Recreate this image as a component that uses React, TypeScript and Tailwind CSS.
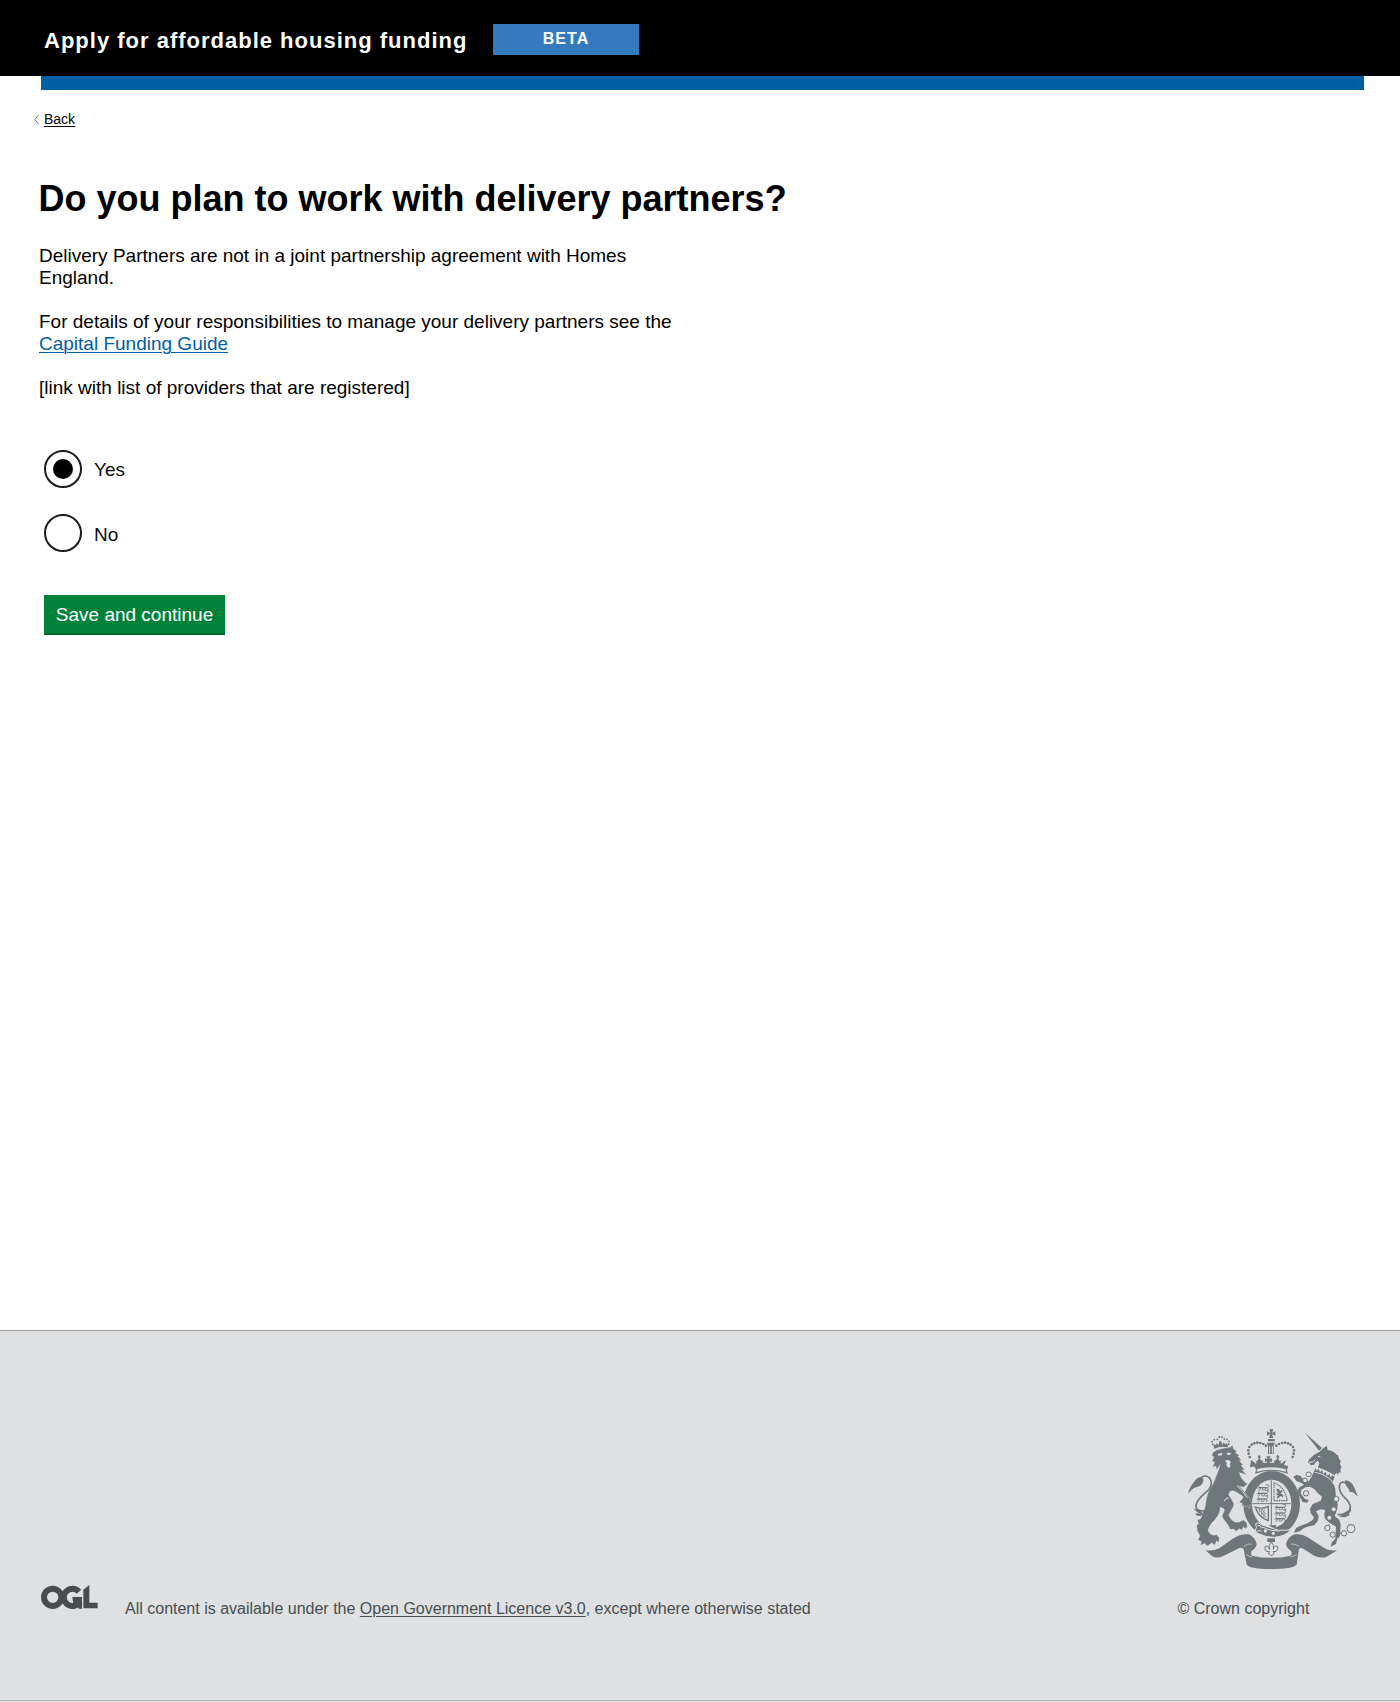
import React from "react";

function Crest({ className }: { className: string }) {
  const beads: [number, number][] = [
    [239, 141], [236, 131], [235, 121], [238, 111], [245, 104], [253, 100], [262, 98], [271, 99], [280, 102], [288, 107],
    [368, 141], [371, 131], [372, 121], [369, 111], [362, 104], [354, 100], [345, 98], [336, 99], [327, 102], [319, 107],
  ];
  const lionBeads: [number, number][] = [
    [80, 43], [78, 35], [85, 29], [94, 28], [100, 21], [108, 21], [115, 27], [123, 28], [129, 34], [128, 42],
  ];
  const charges: [number, number][] = [
    [260, 232], [258, 249], [257, 266], [311, 291], [311, 308], [311, 325],
  ];
  return (
    <svg viewBox="0 0 600 510" className={className} fill="#6f777b">
      {/* garter and shield */}
      <ellipse cx="305" cy="281" rx="72" ry="85" fill="none" stroke="#6f777b" strokeWidth="26" />
      <path d="M304 211v136M247 281h115" stroke="#6f777b" strokeWidth="3" />
      {charges.map(([x, y]) => (
        <g key={`${x}-${y}`} transform={`translate(${x} ${y})`} fill="none" stroke="#6f777b">
          <path d="M6 1h26" strokeWidth="4" />
          <path d="M8-4v5l-6 2M12 1l-3 8h-4M17 1l2 7h-4M28 1l-4 8h-4M31 1l5 7h-5M32 1q7-2 4-8l-9-1" strokeWidth="2.4" />
        </g>
      ))}
      <path d="M312 219q32 10 40 53h-40z" fill="none" stroke="#6f777b" strokeWidth="3.5" strokeDasharray="5 2" />
      <path d="M320 236l7 1 3 6 6-3 1 5-5 5 8 6-1 6-8-4-6 7-5-1 4-9-6-2 2-5 5 1-5-6z" />
      <path d="M256 291q20 8 39-2v43q-29-8-39-41z" fill="none" stroke="#6f777b" strokeWidth="4" />
      <path d="M265 296l24 27M273 296l16 18M268 306v-10M275 317v-21M282 324v-29" stroke="#6f777b" strokeWidth="2" />

      {/* central crown */}
      <path d="M298 58h12l-4 11 10-5v13l-10-5 4 12h-13l4-12-10 5V64l11 5zM294 87h20v7h-20zM291 98h25l-5 8v26h-17v-25z" />
      <path d="M299 109v22M307 109v22" stroke="#dee0e2" strokeWidth="3" />
      {beads.map(([x, y]) => <circle key={`${x}-${y}`} cx={x} cy={y} r="4" />)}
      <path d="M243 150l9 6 5 5 3-3-3-6 6 0 3-6-3-6 5-6 4 6-2 7 5 5 5-1-3 7h16l-4-4-4 2v-11l8 2-4-8h13l-4 8 8-2v11l-4-2-4 4h16l-3-7 5 1 5-5-2-7 4-6 5 6-3 6 3 6h6l-3 6 3 3 5-5 9-6-8 22q-50-13-100 0z" />
      <path d="M253 168q51-13 102 0l-4 11q1 6 3 12-49-18-99 0l3-12z" />
      <path d="M261 177q43-11 86 0l1 8q-44-12-88 0z" fill="#dee0e2" />

      {/* fleur-de-lis and ribbon */}
      <path d="M292 385h23v11h-23z" />
      <path d="M304 396q10 9 6 22 2-12 12-9 5 8-3 15l-10 1 4 6-9 6-9-6 4-6-10-1q-8-7-3-15 10-3 12 9-4-13 6-22z" fill="none" stroke="#6f777b" strokeWidth="3" />
      <path d="M106 421Q130 424 148 415L188 386Q214 370 236 373 254 380 260 402 258 414 246 422 240 430 246 437 304 450 362 437 368 430 362 422 350 414 348 402 354 380 374 373 396 370 420 386L458 411Q476 424 502 421L470 440Q452 447 430 436L400 416Q386 410 386 424L380 464Q366 477 304 477 242 477 230 464L222 424Q222 410 208 414L160 438Q140 447 126 438Z" />
      <path d="M220 409q14-9 25-7M388 409q-14-9-25-7M228 433q5 5 19 8M380 433q-5 5-19 8" fill="none" stroke="#dee0e2" strokeWidth="2" />

      {/* buckled strap */}
      <path d="M257 341q8-7 17 3l52 17 36-1q-17 20-50 22-24 0-43-10-14-3-13-12 6-4 1-19z" stroke="#dee0e2" strokeWidth="3" />
      <path d="M263 347q9-4 12 8M259 365q9-7 16-1M276 351q24 13 52 12" fill="none" stroke="#dee0e2" strokeWidth="3" />
      <circle cx="286" cy="363" r="5" fill="#dee0e2" /><circle cx="310" cy="370" r="5" fill="#dee0e2" />
      <path d="M295 346l19 9 6-10z" />

      {/* lion */}
      <g transform="translate(48 60)">
        {lionBeads.map(([x, y]) => <circle key={`${x}-${y}`} cx={x} cy={y} r="2.8" />)}
        <path d="M82 48l3-5 5 3 2-7 5 7 4-13h4l4 12 4-8 4 6 6-3 3 5-1 7q-21-5-40 4z" />
        <path d="M80 68L92 60 112 55 132 52 140 46 142 56 152 64 148 68 160 76 155 79 166 90 160 92 171 105 165 106 176 120 168 119 181 134 168 130 160 128 164 140Q172 155 184 162L172 172 160 168Q172 180 186 198L196 214 199 228 193 224 190 236 184 227 178 232 174 226 165 229 170 221 160 216 168 208 172 200Q158 188 142 182L132 184 128 195Q138 208 144 222 143 232 134 244L128 256Q136 272 148 277L160 276 172 270 182 278 184 290 178 296 172 290 168 300 160 296 150 304 143 297 132 298 128 288 112 266 108 258 116 240Q112 232 102 232 104 248 88 268 70 285 66 300 68 312 82 316L92 314 100 324 98 338 92 332 86 346 78 338 64 348 56 340 44 346 46 334 36 330 42 318 34 302 32 284 38 282 34 270 44 266 50 250Q60 232 60 214 62 188 82 160L98 120 102 104 92 120 90 108 80 112 86 96 78 94 84 80 78 78Z" stroke="#dee0e2" strokeWidth="1" />
        <path d="M95 72l15-4-3 8-9 1zM122 68l14 1-5 6-8-1zM117 92q7-4 13-1l5 6-3 3 1 10-5 4-7-8 1-7z" fill="#dee0e2" />
        <path d="M153 167q16 13 31 36M128 204q-8-2-14 10" fill="none" stroke="#dee0e2" strokeWidth="3" />
        <path d="M56 243q-28 0-26-17 2-16 26-36 21-16 20-33-3-19-19-19-12 1-17 13" fill="none" stroke="#6f777b" strokeWidth="5" />
        <path d="M34 145q9-7 18 1 1 15-11 22l-17 6q-10 6-17 17 3-19 14-31 6-10 13-15zM22 236l20 4 10 12-14-2zM28 250l24 2-9 6-11-1z" />
      </g>

      {/* unicorn */}
      <g transform="translate(360 60)">
        <path d="M45 8l51 46-9 8z" />
        <path d="M72 74L88 66 98 56 110 47 113 60Q130 62 140 74L144 76 147 86 152 92 150 101 154 111 151 119 153 129 147 126 144 134 139 128 134 136Q112 122 84 112L88 98 82 92 76 98 72 104 62 106 59 100 54 98 56 90Z" />
        <path d="M57 97l13-2 6-6M84 80h7" fill="none" stroke="#dee0e2" strokeWidth="3" />
        <path d="M76 114l5 9 4-8 5 12 6-7 4 12 7-7 4 12 8-6 1 10 8-5 6 4-8 22q-22-22-56-32z" />
        <path d="M74 127q34 5 54 29" fill="none" stroke="#dee0e2" strokeWidth="3" />
        <path d="M76 128Q104 134 132 164L136 178 138 205Q148 225 138 248L134 258 148 270 152 284 150 318 142 326 138 342 122 350 126 336 136 326 138 290 118 278 106 268Q100 256 106 240L92 238 78 244 86 258 84 272 72 286 52 290 38 296 30 304 12 308 18 294 30 288 52 280 68 270 72 262 62 250 60 236 68 222 92 212 96 200Q82 190 72 176L60 170 46 172 34 180 32 190 44 206 56 210 52 218 38 216 30 202 22 184 28 172 42 164 34 158 20 154 10 140 20 134 32 138 42 152 56 154Q66 140 70 128Z" />
        <circle cx="131" cy="238" r="6" fill="#dee0e2" /><circle cx="118" cy="263" r="6" fill="#dee0e2" />
        <path d="M143 254q40 1 38-24-2-14-20-30-20-24-10-40 9-9 21 3" fill="none" stroke="#6f777b" strokeWidth="5" />
        <path d="M165 151q18 0 27 20l12 29-16-14-10 0q2-5-2-9-11-10-11-26zM160 250l16-10 4-10 4 12-8 9 4 4-15 7-17-1z" />
        <g fill="none" stroke="#6f777b" strokeWidth="3">
          <ellipse cx="56" cy="133" rx="8" ry="7" /><circle cx="45" cy="151" r="7" fill="#dee0e2" />
          <circle cx="48" cy="190" r="8" fill="#dee0e2" /><circle cx="139" cy="207" r="8" fill="#dee0e2" />
          <circle cx="112" cy="294" r="8" /><circle cx="128" cy="314" r="8" fill="#dee0e2" />
          <circle cx="162" cy="310" r="8" /><circle cx="183" cy="296" r="12" />
          <path d="M117 282v5M136 312l18-2" />
        </g>
      </g>
    </svg>
  );
}

function OglLogo() {
  return (
    <svg viewBox="0 0 171 72" className="h-6 w-[57px]" fill="none" stroke="#484e50" strokeWidth="18">
      <circle cx="35" cy="37" r="26" />
      <path d="M114 20A26 26 0 1 0 117 50" />
      <path d="M94 36h29v35h-10l-3-13H97z" fill="#484e50" stroke="none" />
      <path d="M127 14l18-14v53h25v17h-43z" fill="#484e50" stroke="none" />
    </svg>
  );
}

function Radio({ label, checked }: { label: string; checked?: boolean }) {
  return (
    <label className="flex h-[38px] items-center gap-3">
      <span className="flex size-[38px] items-center justify-center rounded-full border-2 border-[#1c1c1c]">
        {checked && <span className="size-5 rounded-full bg-black" />}
      </span>
      <span className={checked ? "pt-px text-[19px] leading-[22px] text-[#0b0c0c]" : "pt-[3px] text-[19px] leading-[22px] text-[#0b0c0c]"}>
        {label}
      </span>
    </label>
  );
}

export default function App() {
  return (
    <div className="flex h-[1702px] w-[1400px] flex-col bg-white font-['Liberation_Sans',Arial,sans-serif] text-black">
      <header className="flex h-[76px] shrink-0 items-start bg-black pl-11 pt-6 text-white">
        <span className="w-[449px] whitespace-nowrap pt-[5px] text-[22px] font-bold leading-6 tracking-[1px]">
          Apply for affordable housing funding
        </span>
        <span className="h-[31px] w-[146px] bg-[#347abe] pt-1.5 text-center text-base font-bold leading-[18px] tracking-[1px]">
          BETA
        </span>
      </header>
      <div className="ml-[41px] h-[13.5px] w-[1323px] shrink-0 bg-[#005ea5]" />

      <main className="flex flex-1 flex-col items-start pl-[39px]">
        <a className="-ml-[5px] mt-[21.5px] flex h-4 items-center gap-[5px] text-sm leading-4">
          <svg viewBox="0 0 5 9" className="h-[9px] w-[5px]" fill="none" stroke="#6f777b">
            <path d="M4.5 0L1 4.5L4.5 9" />
          </svg>
          <span className="underline underline-offset-2">Back</span>
        </a>
        <h1 className="-ml-px mt-[51px] pl-[0.5px] text-4xl font-bold leading-[42px]">Do you plan to work with delivery partners?</h1>
        <div className="mt-[25px] flex w-[650px] flex-col gap-[22px] text-[19px] leading-[22px]">
          <p>Delivery Partners are not in a joint partnership agreement with Homes<br />England.</p>
          <p>
            For details of your responsibilities to manage your delivery partners see the<br />
            <a className="text-[#005ea5] underline decoration-1 underline-offset-2">Capital Funding Guide</a>
          </p>
          <p>[link with list of providers that are registered]</p>
        </div>
        <div className="ml-[5px] mt-[51px] flex flex-col gap-[26px]">
          <Radio label="Yes" checked />
          <Radio label="No" />
        </div>
        <button className="ml-[5px] mt-[43px] h-10 w-[181px] border-b-2 border-[#00692f] bg-[#00823b] pt-0.5 text-[19px] leading-[22px] text-white">
          Save and continue
        </button>
      </main>

      <footer className="flex h-[372px] shrink-0 flex-col border-t border-[#a1a3a5] bg-[#dee0e2] text-base leading-[18px] text-[#484e50]">
        <div className="flex h-[249px] items-end justify-end pr-[30px]">
          <Crest className="h-[170px] w-[200px]" />
        </div>
        <div className="flex h-[120px] items-start pl-[41px] pt-[5px]">
          <OglLogo />
          <p className="ml-[27px] mt-[15px] w-[1052.5px]">
            All content is available under the <a className="underline decoration-1 underline-offset-2">Open Government Licence v3.0</a>, except where otherwise stated
          </p>
          <p className="mt-[15px]">© Crown copyright</p>
        </div>
        <div className="h-px bg-[#b3b4b6]" />
      </footer>
    </div>
  );
}
